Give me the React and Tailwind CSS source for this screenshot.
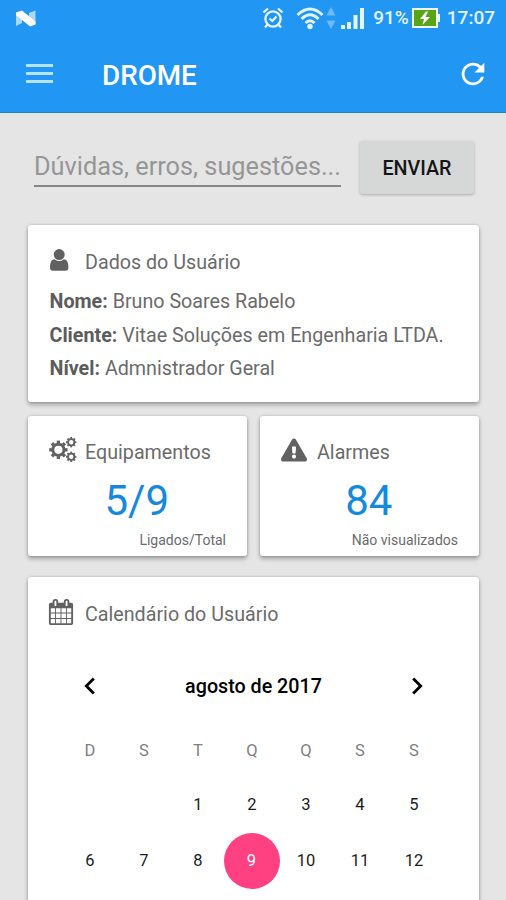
import { FaExclamationTriangle } from 'react-icons/fa';
import { MdChevronLeft, MdChevronRight, MdRefresh } from 'react-icons/md';

const weekDays = ['D', 'S', 'T', 'Q', 'Q', 'S', 'S'];
const days = [null, null, 1, 2, 3, 4, 5, 6, 7, 8, 9, 10, 11, 12];
const today = 9;

const user = [
  { label: 'Nome:', value: 'Bruno Soares Rabelo' },
  { label: 'Cliente:', value: 'Vitae Soluções em Engenharia LTDA.' },
  { label: 'Nível:', value: 'Admnistrador Geral' },
];

function UserIcon() {
  return (
    <svg viewBox="0 0 19 22" className="h-[22px] w-[19px]" fill="currentColor">
      <circle cx="9.200" cy="5.600" r="5.500" />
      <path d="M4.600 10.200 Q9.200 14 13.800 10.200 Q18.400 10.200 18.400 18.500 Q18.400 21.800 15.500 21.800 H2.900 Q0 21.800 0 18.500 Q0 10.200 4.600 10.200Z" />
    </svg>
  );
}

function CalendarIcon() {
  return (
    <svg viewBox="0 0 1792 1792" className="-ml-[1.500px] size-[26px]" fill="currentColor">
      <path d="M192 1664h288v-288h-288v288zm352 0h320v-288h-320v288zm-352-352h288v-320h-288v320zm352 0h320v-320h-320v320zm-352-384h288v-288h-288v288zm736 736h320v-288h-320v288zm-384-736h320v-288h-320v288zm768 736h288v-288h-288v288zm-384-352h320v-320h-320v320zm-352-864v-288q0-13-9.5-22.5t-22.5-9.5h-64q-13 0-22.5 9.5t-9.5 22.5v288q0 13 9.5 22.5t22.5 9.5h64q13 0 22.5-9.5t9.5-22.5zm736 864h288v-320h-288v320zm-384-384h320v-288h-320v288zm384 0h288v-288h-288v288zm32-480v-288q0-13-9.5-22.5t-22.5-9.5h-64q-13 0-22.5 9.5t-9.5 22.5v288q0 13 9.5 22.5t22.5 9.5h64q13 0 22.5-9.5t9.5-22.5zm384-64v1280q0 52-38 90t-90 38h-1408q-52 0-90-38t-38-90v-1280q0-52 38-90t90-38h128v-96q0-66 47-113t113-47h64q66 0 113 47t47 113v96h384v-96q0-66 47-113t113-47h64q66 0 113 47t47 113v96h128q52 0 90 38t38 90z" />
    </svg>
  );
}

// One gear: a ring with eight teeth around it
function Gear({ cx, cy, r, ring, tooth }) {
  return (
    <g transform={`translate(${cx} ${cy})`} stroke="currentColor" fill="none">
      <circle r={r - tooth - ring / 2} strokeWidth={ring} />
      {[0, 45, 90, 135, 180, 225, 270, 315].map((angle) => (
        <line
          key={angle}
          x1="0"
          x2="0"
          y1={-r}
          y2={-r + tooth + 0.6}
          strokeWidth={r * 0.36}
          transform={`rotate(${angle})`}
        />
      ))}
    </g>
  );
}

function GearsIcon() {
  return (
    <svg viewBox="0 0 28 26" className="-ml-px h-[26px] w-[28px]">
      <Gear cx={9.4} cy={12.8} r={9.2} ring={3} tooth={2.1} />
      <Gear cx={22.2} cy={5.2} r={5.2} ring={1.8} tooth={1.2} />
      <Gear cx={22.2} cy={19.8} r={5.2} ring={1.8} tooth={1.2} />
    </svg>
  );
}

function StatusBar() {
  return (
    <div className="flex h-9 items-center justify-between pr-[11px] pl-[15px]">
      <svg viewBox="0 0 21 17" className="h-[17px] w-[21px]">
        <path d="M1 2.500 H7 V13 L1 16Z M14 3 L20.500 .5 V14 H14Z" fill="#a8d8fb" />
        <path d="M1 2.500 L7 .5 L20.500 11.500 V14.500 L15 16.500 L1 5Z" fill="#fff" />
      </svg>
      <div className="flex items-center text-[19px] font-medium text-[#e4f4ff]">
        {/* alarm */}
        <svg viewBox="0 0 22 22" className="mr-[12px] size-[22px]" fill="none" stroke="currentColor" strokeWidth="2.300">
          <circle cx="11" cy="12" r="7.6" />
          <path d="M1.5 5.5 L6 1.5 M20.5 5.5 L16 1.5 M5.5 17.5 L3 20.5 M16.5 17.5 L19 20.5" />
          <path d="M7.5 11.5 L10.3 14 L14.5 9.5" />
        </svg>
        {/* wifi */}
        <svg viewBox="0 0 28 24" className="h-[24px] w-[28px]" fill="none" stroke="currentColor" strokeWidth="2.8">
          <path d="M1.5 9 Q14 -3 26.500 9" />
          <path d="M5.500 13 Q14 4.500 22.500 13" />
          <path d="M9.500 17 Q14 12.500 18.500 17" />
          <circle cx="14" cy="20.500" r="2.700" fill="currentColor" stroke="none" />
        </svg>
        <svg viewBox="0 0 10 22" className="mr-[5px] ml-[2px] h-[22px] w-[10px]" fill="#6fbaf6">
          <path d="M5 0 L9.500 8.500 H.5Z M.5 13.500 H9.500 L5 22Z" />
        </svg>
        {/* signal */}
        <svg viewBox="0 0 23 21" className="mr-[9px] h-[21px] w-[23px]" fill="currentColor">
          <path d="M0 17h4v4h-4z M6 14h4v7h-4z M12.500 7h4v14h-4z M19 0h4v21h-4z" />
        </svg>
        <span className="pt-px">91%</span>
        <svg viewBox="0 0 28 20" className="mr-[7px] ml-[3px] h-[20px] w-[28px]">
          <rect x="1" y="1" width="24" height="18" fill="#58a618" stroke="#f1fbff" strokeWidth="2" />
          <path d="M26 6h2v8h-2z" fill="#f1fbff" />
          <path d="M14 3.500 L8 11 H12 L10.500 17 L18 9 H13.500 L16 3.500Z" fill="#fff" />
        </svg>
        <span className="pt-px">17:07</span>
      </div>
    </div>
  );
}

function Card({ className, children }) {
  return (
    <section
      className={`rounded-[3px] bg-white pl-[21.5px] shadow-[0_3px_4px_rgba(0,0,0,0.28),0_0_3px_rgba(0,0,0,0.2)] ${className}`}
    >
      {children}
    </section>
  );
}

function CardTitle({ icon, children }) {
  return (
    <h2 className="flex h-9 items-center text-[19.7px]">
      <span className="w-[35.5px] shrink-0 pb-1 text-[#616161]">{icon}</span>
      <span className="pt-[2px]">{children}</span>
    </h2>
  );
}

function Counter({ icon, title, value, caption }) {
  return (
    <Card className="h-[140px] flex-1 pt-[18px] pr-[21px]">
      <CardTitle icon={icon}>{title}</CardTitle>
      <p className="pt-px pr-[2px] text-center text-[42px] leading-[60px] text-[#1589de]">{value}</p>
      <p className="-mt-px text-right text-[14px] leading-[20px]">{caption}</p>
    </Card>
  );
}

export default function App() {
  return (
    <div className="flex h-[900px] w-[506px] flex-col overflow-hidden bg-[#e5e5e5] font-[Roboto,sans-serif] text-[#6b6b6b]">
      <header className="h-[113px] shrink-0 border-b border-[#1b84d8] bg-[#2196f3]">
        <StatusBar />
        <div className="flex h-[76px] items-center pr-[16px] pl-[26px]">
          <button className="flex w-[76px] flex-col gap-[5px] pb-[2px]">
            <span className="h-[3px] w-[27px] bg-[#b5e3fd]" />
            <span className="h-[3px] w-[27px] bg-[#b5e3fd]" />
            <span className="h-[3px] w-[27px] bg-[#b5e3fd]" />
          </button>
          <h1 className="flex-1 pt-[3px] text-[27.8px] font-medium text-white">DROME</h1>
          <MdRefresh className="mb-[1px] size-[34px] text-white" />
        </div>
      </header>

      <main className="flex flex-1 flex-col pr-[27px] pl-[28px] pt-[28px]">
        <form className="flex pr-[5px] pl-[6px]">
          <input
            className="mr-[19px] h-[46px] w-[307px] border-b-2 border-[#868686] pt-[7px] text-[25.3px] outline-none placeholder:text-[#969696]"
            placeholder="Dúvidas, erros, sugestões..."
          />
          <button
            type="button"
            className="h-[53px] flex-1 rounded-[3px] bg-[#d6d8d8] pt-[2px] text-[19.7px] font-medium text-[#151515] shadow-[0_1px_3px_rgba(0,0,0,0.25)]"
          >
            ENVIAR
          </button>
        </form>

        <Card className="mt-[31px] h-[177px] shrink-0 pt-[19px]">
          <CardTitle icon={<UserIcon />}>Dados do Usuário</CardTitle>
          <div className="mt-[5px] text-[19.7px] leading-[33.7px]">
            {user.map(({ label, value }) => (
              <p key={label}>
                <b className="text-[#5c5c5c]">{label}</b> {value}
              </p>
            ))}
          </div>
        </Card>

        <div className="mt-[14px] flex gap-[13px]">
          <Counter icon={<GearsIcon />} title="Equipamentos" value="5/9" caption="Ligados/Total" />
          <Counter
            icon={<FaExclamationTriangle className="-ml-px size-[26px]" />}
            title="Alarmes"
            value="84"
            caption="Não visualizados"
          />
        </div>

        <Card className="mt-[21px] h-[400px] shrink-0 pt-[19px]">
          <CardTitle icon={<CalendarIcon />}>Calendário do Usuário</CardTitle>
          <div className="mt-[36px] ml-[13.5px] w-[378px] text-[#1c1c1c]">
            <div className="flex h-9 items-center justify-between pr-[7px] pl-[10px] text-black">
              <MdChevronLeft className="size-[34px]" />
              <span className="pt-[2px] text-[19.7px] font-medium">agosto de 2017</span>
              <MdChevronRight className="size-[34px]" />
            </div>
            <div className="mt-[19px] grid grid-cols-7 text-center text-[16.5px]">
              {weekDays.map((day, i) => (
                <span key={i} className="h-[54px] leading-[56px] text-[#808080]">
                  {day}
                </span>
              ))}
              {days.map((day, i) => (
                <span key={i} className="flex h-[56px] items-center justify-center">
                  <span
                    className={
                      day === today
                        ? '-ml-px size-[56px] shrink-0 rounded-full bg-[#ff4081] leading-[56px] text-white'
                        : ''
                    }
                  >
                    {day}
                  </span>
                </span>
              ))}
            </div>
          </div>
        </Card>
      </main>
    </div>
  );
}
